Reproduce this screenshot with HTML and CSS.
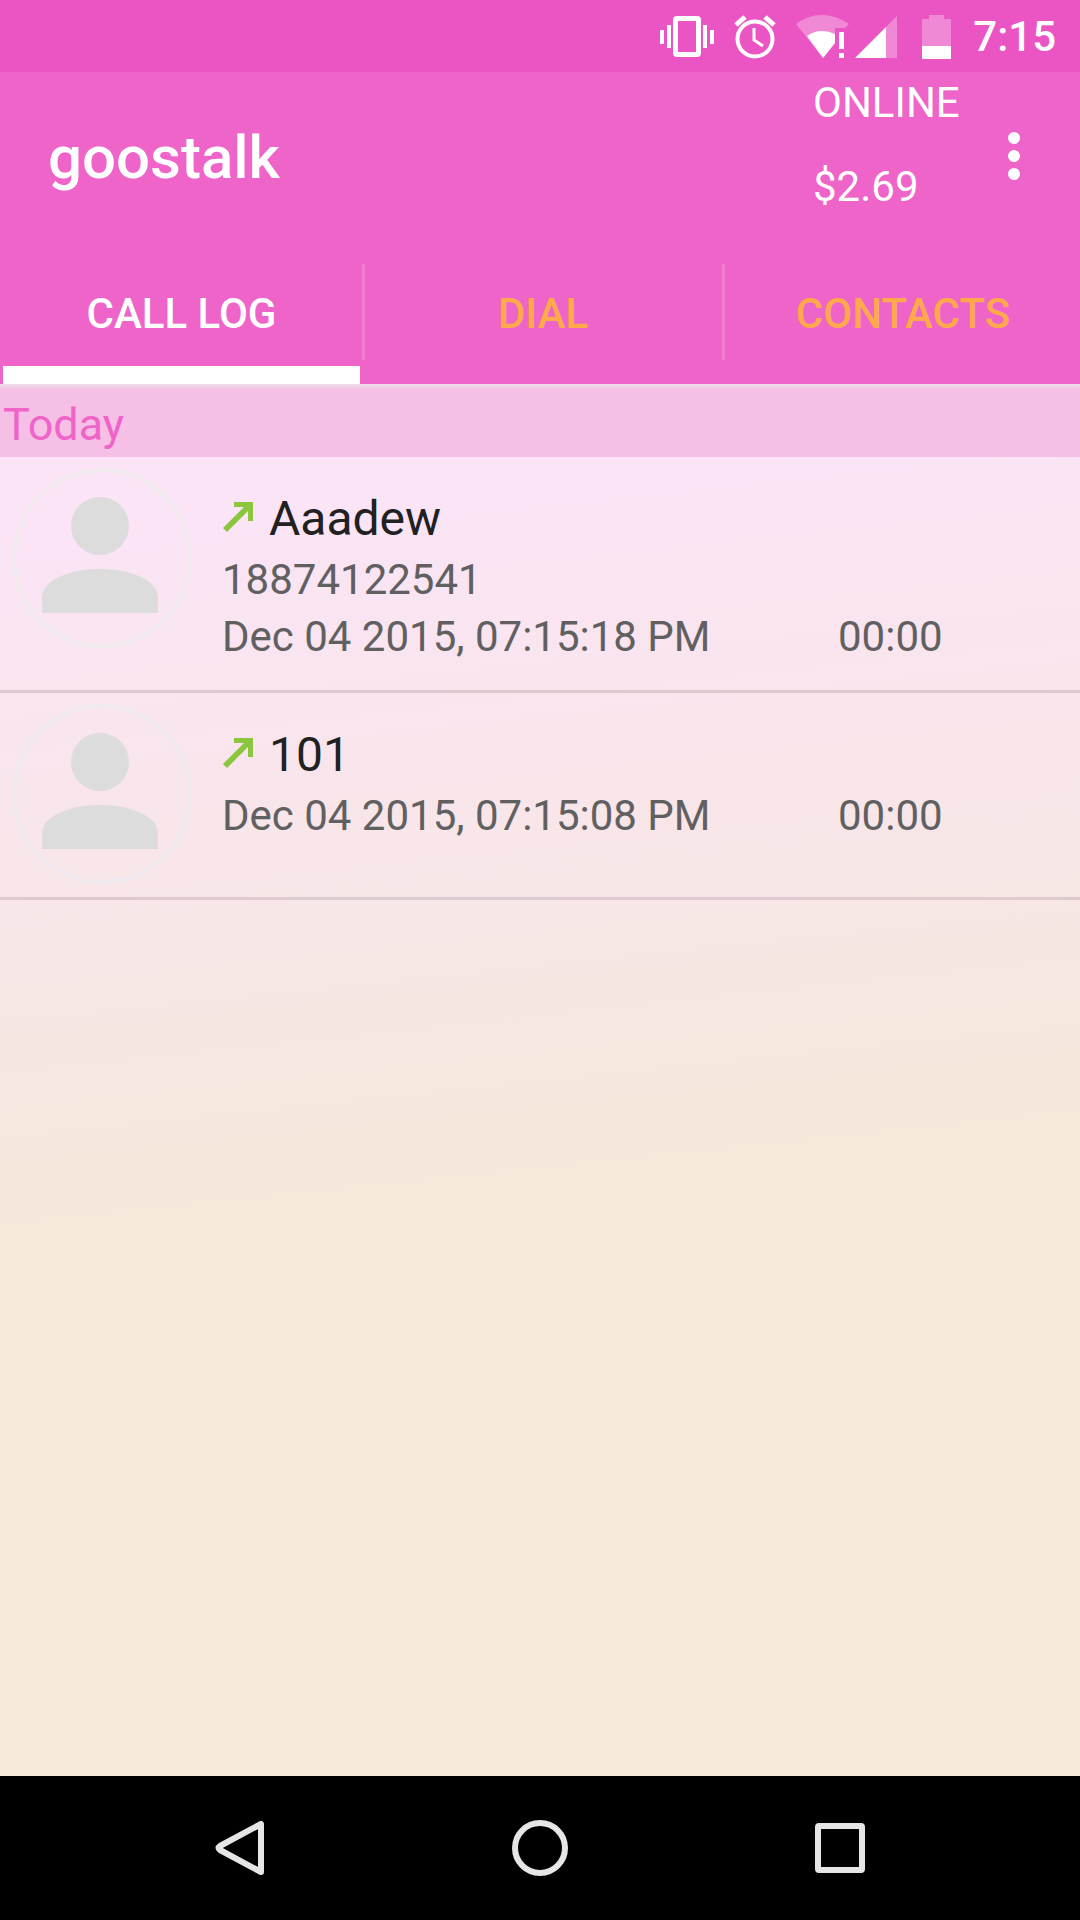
FILE: index.html
```html
<!DOCTYPE html>
<html lang="en">
<head>
    <meta charset="UTF-8">
    <meta name="viewport" content="width=device-width, initial-scale=1.0">
    <title>goostalk</title>
    <link rel="stylesheet" href="styles.css">
</head>
<body>
    <div class="status-bar">
        <svg class="status-vibrate" width="54" height="44" viewBox="0 0 54 44" fill="#fff">
            <rect x="0" y="15" width="4" height="14"/>
            <rect x="7" y="10" width="4" height="23"/>
            <rect x="43" y="10" width="4" height="23"/>
            <rect x="50" y="15" width="4" height="14"/>
            <path fill-rule="evenodd" d="M17 1h20q4 0 4 4v33q0 4-4 4H17q-4 0-4-4V5q0-4 4-4zm1 5v31h18V6z"/>
        </svg>
        <svg class="status-alarm" width="42" height="44" viewBox="0 0 42 44" fill="none" stroke="#fff">
            <circle cx="21" cy="24" r="17.500" stroke-width="4"/>
            <path d="M20 13v12l9 6" stroke-width="3"/>
            <path d="M2 10l9-8M40 10l-9-8" stroke-width="5"/>
        </svg>
        <svg class="status-wifi" width="53" height="44" viewBox="0 0 53 44" fill="#fff">
            <path opacity=".3" d="M0 9Q12 0 26 0T53 9l-4 4H39v15L27 43z"/>
            <path d="M11 21q7-5 15-5 7 0 13 3v9L27 43z"/>
            <path d="M43 17h5v17h-5zM43 38h5v5h-5z"/>
        </svg>
        <svg class="status-signal" width="42" height="44" viewBox="0 0 42 44" fill="#fff">
            <path opacity=".3" d="M42 1v42H31V12z"/>
            <path d="M31 12v31H0z"/>
        </svg>
        <svg class="status-battery" width="29" height="44" viewBox="0 0 29 44" fill="#fff">
            <path opacity=".3" d="M7 0h15v4h7v27H0V4h7z"/>
            <path d="M0 31h29v13H0z"/>
        </svg>
        <span class="status-time">7:15</span>
    </div>

    <header class="app-bar">
        <h1>goostalk</h1>
        <div class="account">
            <span>ONLINE</span>
            <span>$2.69</span>
        </div>
        <button type="button" class="menu-button" aria-label="Menu">
            <svg width="12" height="48" viewBox="0 0 12 48" fill="#fff">
                <circle cx="6" cy="6" r="6"/>
                <circle cx="6" cy="24" r="6"/>
                <circle cx="6" cy="42" r="6"/>
            </svg>
        </button>
    </header>

    <nav class="tabs">
        <button type="button" class="tab active"><span>CALL LOG</span></button>
        <button type="button" class="tab"><span>DIAL</span></button>
        <button type="button" class="tab"><span>CONTACTS</span></button>
    </nav>

    <main class="call-log">
        <h2>Today</h2>
        <ul class="calls">
            <li class="call">
                <svg class="avatar" width="182" height="182" viewBox="0 0 182 182">
                    <circle cx="90" cy="91" r="88" fill="none" stroke="#f0eaee" stroke-width="4"/>
                    <circle cx="88" cy="59" r="29" fill="#dcdcdc"/>
                    <path fill="#dcdcdc" d="M30 146v-15c0-19 29-29 58-29s58 10 58 29v15z"/>
                </svg>
                <div class="details">
                    <div class="name">
                        <svg class="outgoing" width="30" height="30" viewBox="0 0 30 30" fill="#8bc63e"><path d="M11 0h19v19h-5V9L4 30l-4-4L21 5H11z"/></svg>
                        <span>Aaadew</span>
                    </div>
                    <div class="line">18874122541</div>
                    <div class="line"><span>Dec 04 2015, 07:15:18 PM</span><span class="duration">00:00</span></div>
                </div>
            </li>
            <li class="call">
                <svg class="avatar" width="182" height="182" viewBox="0 0 182 182">
                    <circle cx="90" cy="91" r="88" fill="none" stroke="#f0eaee" stroke-width="4"/>
                    <circle cx="88" cy="59" r="29" fill="#dcdcdc"/>
                    <path fill="#dcdcdc" d="M30 146v-15c0-19 29-29 58-29s58 10 58 29v15z"/>
                </svg>
                <div class="details">
                    <div class="name">
                        <svg class="outgoing" width="30" height="30" viewBox="0 0 30 30" fill="#8bc63e"><path d="M11 0h19v19h-5V9L4 30l-4-4L21 5H11z"/></svg>
                        <span>101</span>
                    </div>
                    <div class="line"><span>Dec 04 2015, 07:15:08 PM</span><span class="duration">00:00</span></div>
                </div>
            </li>
        </ul>
    </main>

    <footer class="system-nav">
        <button type="button" aria-label="Back">
            <svg width="56" height="56" viewBox="0 0 56 56"><path d="M49 4v48L8 30q-3-2 0-4z"/></svg>
        </button>
        <button type="button" aria-label="Home">
            <svg width="56" height="56" viewBox="0 0 56 56"><circle cx="28" cy="28" r="25"/></svg>
        </button>
        <button type="button" aria-label="Recent apps">
            <svg width="56" height="56" viewBox="0 0 56 56"><rect x="6" y="6" width="44" height="44" rx="1"/></svg>
        </button>
    </footer>
</body>
</html>
```

FILE: styles.css
```css
*{box-sizing:border-box}

body{
    display:flex;
    flex-direction:column;
    min-height:100vh;
    margin:0;
    font-family:Roboto,"Noto Sans",sans-serif;
    font-size:42px;
    background:#f6e8d9;
}
h1,h2,ul{margin:0;padding:0}
button{padding:0;border:none;background:none;font:inherit;cursor:pointer}
svg{display:block;flex:none}

.status-bar{
    display:flex;
    justify-content:flex-end;
    align-items:center;
    height:72px;
    padding:2px 24px 0 0;
    background:#eb55c3;
    color:#fff;
}
.status-alarm{margin-left:20px}
.status-wifi{margin-left:20px}
.status-signal{margin-left:6px}
.status-battery{margin-left:25px}
.status-time{margin-left:22px;font-weight:500;line-height:70px}

.app-bar{
    display:flex;
    align-items:flex-start;
    height:168px;
    padding:6px 15px 0 48px;
    background:#ee64c8;
    color:#fff;
}
.app-bar h1{font-size:60px;font-weight:500;line-height:160px}
.account{
    display:flex;
    flex-direction:column;
    gap:34px;
    width:150px;
    margin-left:auto;
    line-height:50px;
}
.menu-button{
    display:flex;
    align-items:center;
    justify-content:center;
    width:102px;
    height:156px;
}

.tabs{
    display:grid;
    grid-template-columns:repeat(3,1fr);
    height:144px;
    background:#ee64c8;
}
.tab{padding-left:3px;color:#ffa94d;font-weight:500}
.tab + .tab{padding-left:6px;background:linear-gradient(#f27cd2,#f27cd2) no-repeat 2px 24px / 3px 96px}
.tab span{
    display:block;
    height:144px;
    padding-top:24px;
    line-height:100px;
    border-bottom:18px solid transparent;
}
.tab.active{color:#fff}
.tab.active span{border-color:#fff}

.call-log{
    flex:1;
    background:linear-gradient(174deg,#fae4f6 10%,#f9e5ee 24%,#f7e6e6 38%,#f6e8da 58%);
}
.call-log h2{
    height:73px;
    padding:5px 3px 0;
    font-size:45px;
    font-weight:400;
    line-height:72px;
    color:#ee64c8;
    background:linear-gradient(#ecdfea,#f6bfe5 6px);
}

.calls{list-style:none}
.call{
    display:grid;
    grid-template-columns:222px 1fr;
    border-bottom:3px solid #dec9d0;
}
.avatar{margin:10px 0 12px 12px}
.details{padding:30px 0 25px}
.name{
    display:flex;
    align-items:center;
    gap:16px;
    font-size:48px;
    line-height:64px;
    color:#212121;
}
.outgoing{margin:0 0 4px 1px}
.line{
    display:flex;
    justify-content:space-between;
    line-height:57px;
    color:#616061;
}
.duration{width:242px}

.system-nav{
    display:grid;
    grid-template-columns:repeat(3,1fr);
    height:144px;
    padding:0 90px;
    background:#000;
}
.system-nav button{display:flex;align-items:center;justify-content:center}
.system-nav svg{fill:none;stroke:#e6e6e6;stroke-width:6;stroke-linejoin:round}
```
